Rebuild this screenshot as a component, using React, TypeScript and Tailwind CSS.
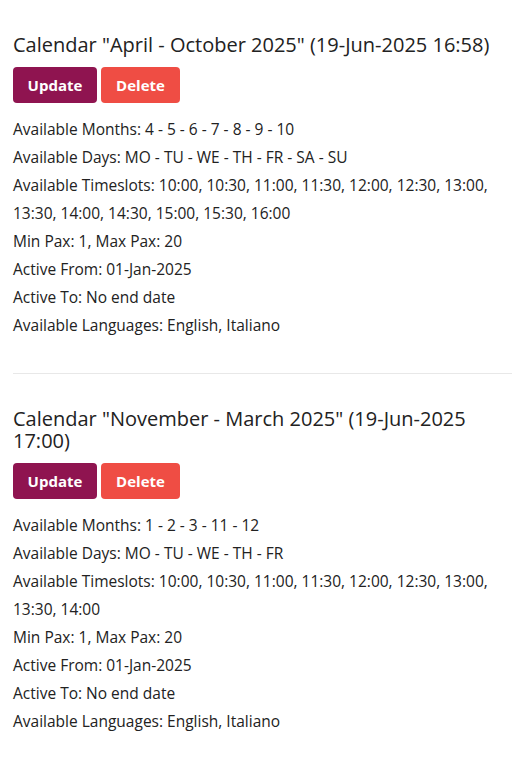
import React from "react";

type Cal = {
  title: string;
  months: string;
  days: string;
  slots: string;
};

const cals: Cal[] = [
  {
    title: 'Calendar "April - October 2025" (19-Jun-2025 16:58)',
    months: "4 - 5 - 6 - 7 - 8 - 9 - 10",
    days: "MO - TU - WE - TH - FR - SA - SU",
    slots:
      "10:00, 10:30, 11:00, 11:30, 12:00, 12:30, 13:00, 13:30, 14:00, 14:30, 15:00, 15:30, 16:00",
  },
  {
    title: 'Calendar "November - March 2025" (19-Jun-2025 17:00)',
    months: "1 - 2 - 3 - 11 - 12",
    days: "MO - TU - WE - TH - FR",
    slots: "10:00, 10:30, 11:00, 11:30, 12:00, 12:30, 13:00, 13:30, 14:00",
  },
];

function Section({ c }: { c: Cal }) {
  return (
    <div className="pr-[12px]">
      <h2 className="text-[20px] leading-[22px] font-normal text-[#222]">{c.title}</h2>
      <div className="mt-[11px] flex gap-[4px]">
        <button className="h-[36px] w-[84px] rounded-[4px] bg-[#8f1450] text-white text-[15px] font-bold">
          Update
        </button>
        <button className="h-[36px] w-[79px] rounded-[4px] bg-[#ef4d44] text-white text-[15px] font-bold">
          Delete
        </button>
      </div>
      <div className="mt-[12px] text-[15.5px] leading-[28px] text-[#222]">
        <p>Available Months: {c.months}</p>
        <p>Available Days: {c.days}</p>
        <p>Available Timeslots: {c.slots}</p>
        <p>Min Pax: 1, Max Pax: 20</p>
        <p>Active From: 01-Jan-2025</p>
        <p>Active To: No end date</p>
        <p>Available Languages: English, Italiano</p>
      </div>
    </div>
  );
}

export default function App() {
  return (
    <div
      className="min-h-[759px] bg-white pl-[13px] pt-[34px]"
      style={{ fontFamily: "'Open Sans', 'Noto Sans', sans-serif" }}
    >
      <Section c={cals[0]} />
      <div className="mt-[34px] mb-[34px] border-t border-[#e8e8e8]" />
      <Section c={cals[1]} />
    </div>
  );
}
